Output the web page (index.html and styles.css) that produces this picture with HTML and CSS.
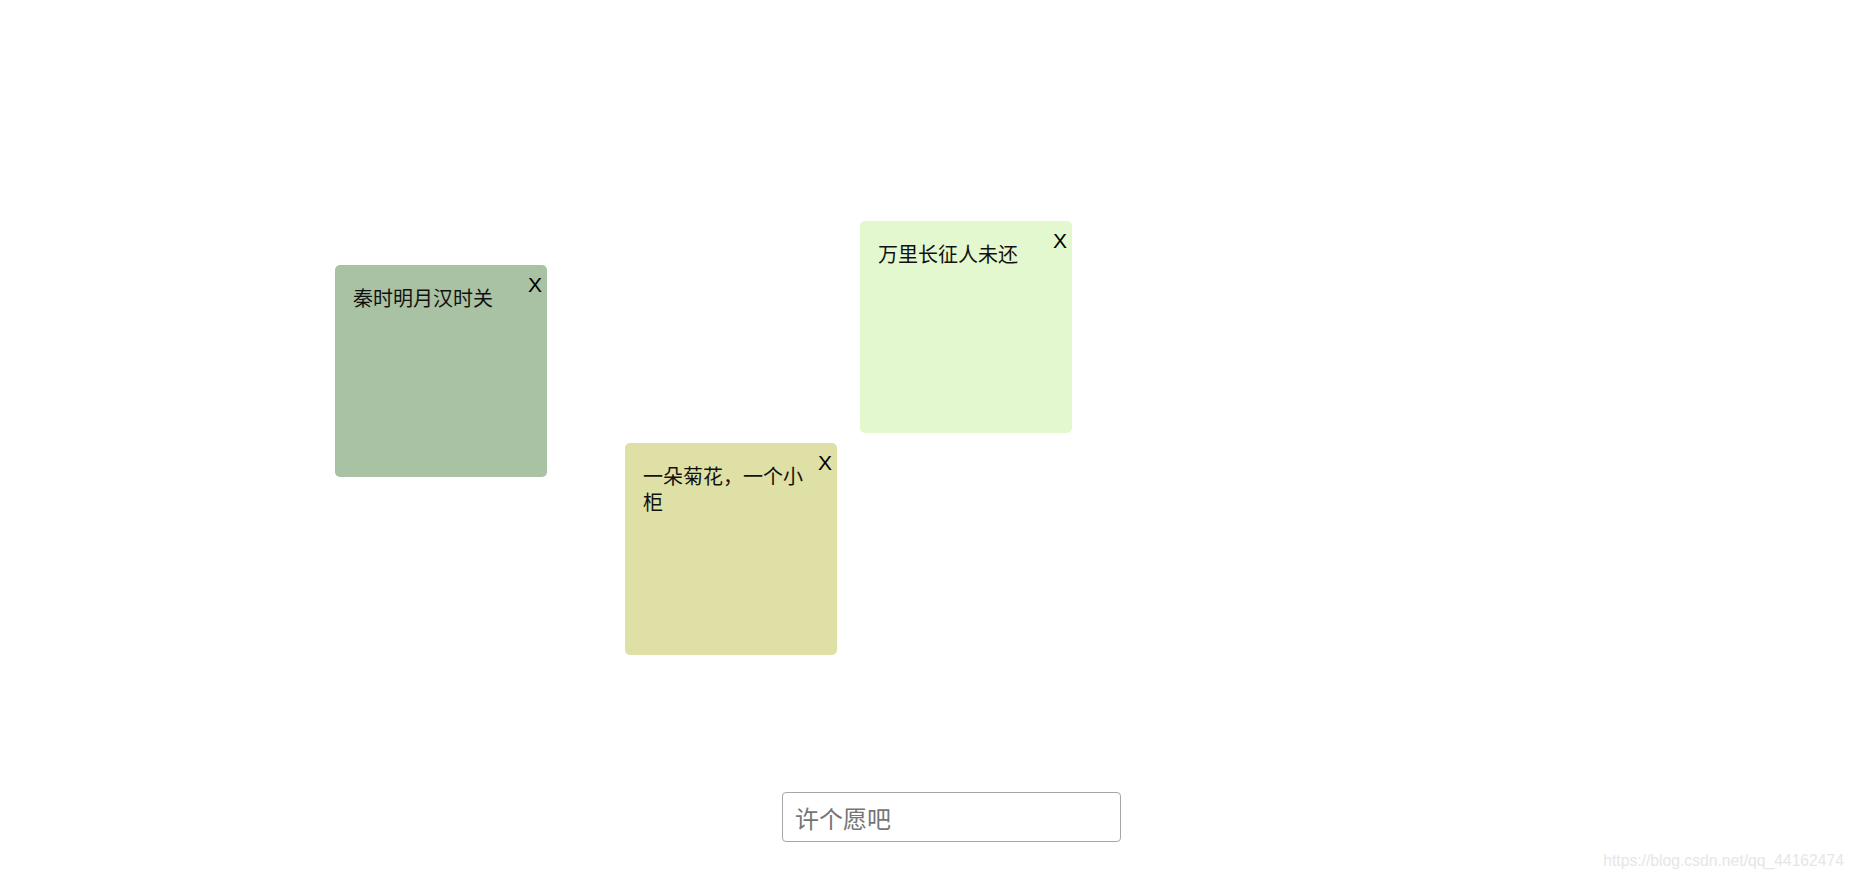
FILE: index.html
```html
<!DOCTYPE html>
<html lang="zh">
<head>
<meta charset="utf-8">
<title>许愿墙</title>
<link rel="stylesheet" href="styles.css">
</head>
<body>
<main class="board">
  <div class="note note-sage" style="left:335px;top:265px;">
    <span class="close">X</span>
    <p class="note-text">秦时明月汉时关</p>
  </div>
  <div class="note note-khaki" style="left:625px;top:443px;">
    <span class="close">X</span>
    <p class="note-text">一朵菊花，一个小柜</p>
  </div>
  <div class="note note-mint" style="left:860px;top:221px;">
    <span class="close">X</span>
    <p class="note-text">万里长征人未还</p>
  </div>
</main>
<footer class="bottom">
  <input class="wish" type="text" placeholder="许个愿吧">
</footer>
<div class="watermark">https://blog.csdn.net/qq_44162474</div>
</body>
</html>
```

FILE: styles.css
```css
html, body {
  margin: 0;
  padding: 0;
  height: 100%;
  background: #ffffff;
}

body {
  display: flex;
  flex-direction: column;
  font-family: "Liberation Sans", "Noto Sans CJK SC", sans-serif;
  color: #111;
  overflow: hidden;
  position: relative;
}

.board {
  flex: 1;
  position: relative;
}

.note {
  position: absolute;
  width: 212px;
  height: 212px;
  box-sizing: border-box;
  padding: 20px 18px 20px 18px;
  border-radius: 5px;
}

.note-sage { background: #a9c2a3; }
.note-khaki { background: #dfe0a5; }
.note-mint { background: #e4f8d0; }

.note-text {
  margin: 0;
  font-size: 20px;
  line-height: 26px;
  font-family: "Noto Sans CJK SC", sans-serif;
  color: #111;
}

.close {
  position: absolute;
  top: 8px;
  right: 5px;
  font-size: 21px;
  line-height: 24px;
  color: #000;
  cursor: pointer;
}

.bottom {
  display: flex;
  padding: 0 0 38px 782px;
}

.wish {
  width: 339px;
  height: 50px;
  box-sizing: border-box;
  border: 1px solid #a6a6a6;
  border-radius: 4px;
  padding: 0 12px;
  font-size: 24px;
  font-family: "Noto Sans CJK SC", sans-serif;
  color: #333;
  outline: none;
}

.wish::placeholder {
  color: #757575;
}

.watermark {
  position: absolute;
  right: 10px;
  bottom: 10px;
  font-size: 15.7px;
  color: #e6e6e6;
  font-family: "Liberation Sans", sans-serif;
}
```
